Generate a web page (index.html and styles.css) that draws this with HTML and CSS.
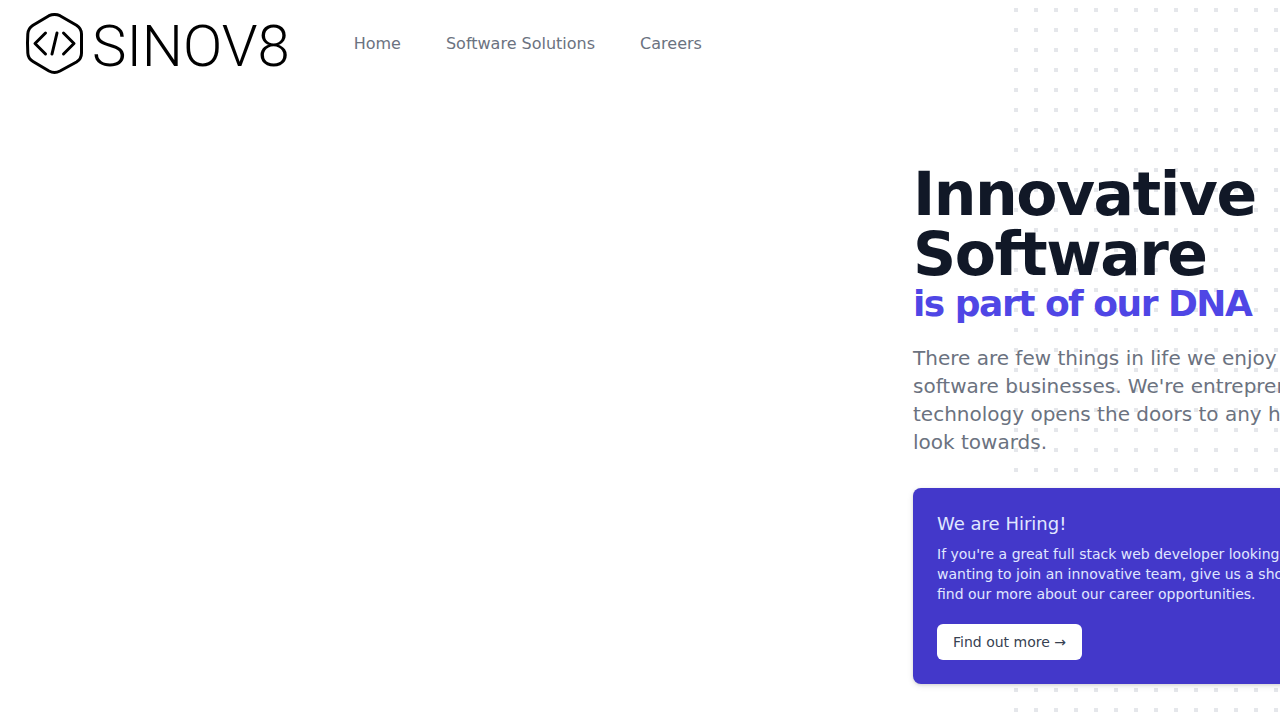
FILE: index.html
```html
<!DOCTYPE html>
<html lang="en">
<head>
<meta charset="utf-8">
<meta name="viewport" content="width=device-width, initial-scale=1">
<title>SINOV8</title>
<link rel="stylesheet" href="styles.css">
</head>
<body>
<div class="page">
  <svg class="dots" aria-hidden="true">
    <defs>
      <pattern id="dot-grid" width="20" height="20" patternUnits="userSpaceOnUse">
        <rect width="4" height="4" fill="#e5e7eb"/>
      </pattern>
    </defs>
    <rect width="404" height="784" fill="url(#dot-grid)"/>
  </svg>
  <header class="header">
    <a class="logo" href="#">
      <svg class="logo-mark" viewBox="0 0 58 62" fill="none" stroke="#000" stroke-linecap="round" stroke-linejoin="round" aria-hidden="true">
        <path stroke-width="3" d="M23 2.700Q28.500 0.300 34 2.700L50.500 12.200Q55.500 15.500 55.500 21L55.500 40Q55.500 46 50.500 49L34 58Q28.500 60.800 23 58L7 48.500Q2 45.500 1.800 40L1.500 30 1.800 21Q2 15.500 7 12.200Z"/>
        <path stroke-width="3" d="M19.500 20L9 30.500L19.500 41M37.500 20L48 30.500L37.500 41M31 20L26 41"/>
      </svg>
      <span class="wordmark">SINOV8</span>
    </a>
    <nav class="nav">
      <a href="#">Home</a>
      <a href="#">Software Solutions</a>
      <a href="#">Careers</a>
    </nav>
  </header>
  <main class="hero">
    <div class="content">
      <h1 class="title">Innovative<br>Software<span class="subtitle">is part of our DNA</span></h1>
      <p class="lead">There are few things in life we enjoy<br>software businesses. We're entrepreneurs<br>technology opens the doors to any horizon<br>look towards.</p>
      <section class="card">
        <h2 class="card-title">We are Hiring!</h2>
        <p class="card-text">If you're a great full stack web developer looking<br>wanting to join an innovative team, give us a shout<br>find our more about our career opportunities.</p>
        <a class="button" href="#">Find out more →</a>
      </section>
    </div>
  </main>
</div>
</body>
</html>
```
FILE: styles.css
```css
* {
  box-sizing: border-box;
}

body {
  margin: 0;
  background: #fff;
  color: #6b7280;
  font-family: "DejaVu Sans", sans-serif;
  font-size: 16px;
  line-height: 24px;
}

h1, h2, p {
  margin: 0;
}

a {
  color: inherit;
  text-decoration: none;
}

.page {
  position: relative;
  min-height: 100vh;
  overflow: hidden;
}

/* Decorative grid behind the content, running off the right edge */
.dots {
  position: absolute;
  z-index: -1;
  top: 8px;
  right: -138px;
  width: 404px;
  height: 784px;
}

.header {
  display: flex;
  align-items: center;
  gap: 64px;
  padding: 13px 26px;
}

.logo {
  display: flex;
  align-items: center;
  gap: 8px;
  color: #000;
}

.logo-mark {
  width: 58px;
  height: 62px;
}

.wordmark {
  padding-top: 4px;
  font-family: Roboto, sans-serif;
  font-size: 58px;
  font-weight: 300;
  line-height: 58px;
}

.nav {
  display: flex;
  gap: 45px;
}

.hero {
  padding: 76px 0 36px 71.33%;
}

.content {
  width: 576px;
  white-space: nowrap;
}

.title {
  color: #111827;
  font-size: 60px;
  font-weight: 700;
  letter-spacing: -0.025em;
  line-height: 60px;
}

.subtitle {
  display: block;
  color: #4f46e5;
  font-size: 36px;
  line-height: 40px;
}

.lead {
  margin-top: 20px;
  font-size: 20px;
  line-height: 28px;
}

.card {
  margin-top: 32px;
  padding: 24px;
  border-radius: 8px;
  background: #4338ca;
  box-shadow: 0 1px 3px rgba(0, 0, 0, 0.1), 0 2px 6px rgba(0, 0, 0, 0.1);
  color: #e0e7ff;
}

.card-title {
  font-size: 18px;
  font-weight: 400;
  line-height: 24px;
}

.card-text {
  margin-top: 8px;
  font-size: 14px;
  line-height: 20px;
}

.button {
  display: inline-block;
  margin-top: 20px;
  padding: 8px 16px;
  border-radius: 6px;
  background: #fff;
  color: #374151;
  font-size: 14px;
  line-height: 20px;
  vertical-align: top;
}
```
